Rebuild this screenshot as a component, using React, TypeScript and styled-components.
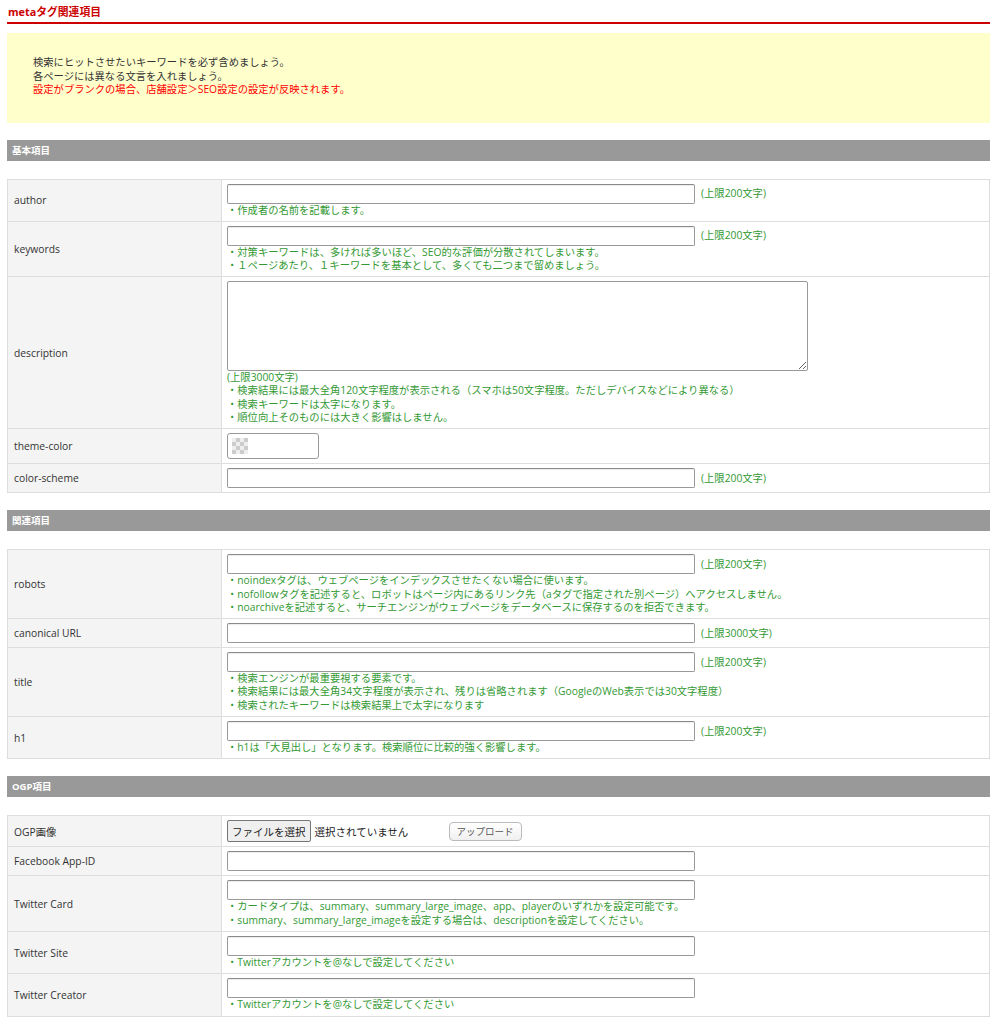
import React from 'react';
import styled, {createGlobalStyle} from 'styled-components';

const GlobalStyle = createGlobalStyle`
  html, body {
    margin: 0;
    padding: 0;
    background: #fff;
  }
  body {
    font-family: "Open Sans", "Noto Sans CJK JP", sans-serif;
    font-size: 10.3px;
    color: #333;
  }
`;

const Page = styled.div`
  width: 983px;
  padding: 5px 0 0 7px;
`;

const Title = styled.h2`
  margin: 0;
  padding: 0 0 4px 1px;
  font-size: 10.8px;
  line-height: 13px;
  font-weight: bold;
  color: #c00;
  border-bottom: 2px solid #c00;
`;

const Notice = styled.div`
  margin-top: 9px;
  background: #ffc;
  padding: 23px 26px 26px;
  line-height: 13.5px;
  color: #333;
`;

const Warn = styled.div`
  color: #f00;
`;

const SectionBar = styled.div`
  margin-top: 17px;
  height: 21px;
  line-height: 21px;
  background: #999;
  color: #fff;
  font-weight: bold;
  font-size: 9.5px;
  padding-left: 5px;
`;

const Table = styled.table`
  width: 100%;
  margin-top: 18px;
  border-collapse: collapse;
  table-layout: fixed;
  border: 1px solid #ddd;
`;

const Label = styled.th`
  box-sizing: border-box;
  width: 214px;
  padding: 4px 6px;
  background: #f3f4f3;
  border: 1px solid #ddd;
  text-align: left;
  font-weight: normal;
  vertical-align: middle;
  color: #333;
`;

const Cell = styled.td`
  padding: 4px 5px;
  border: 1px solid #ddd;
  vertical-align: top;
`;

const Line = styled.div`
  display: flex;
  align-items: center;
  gap: 6px;
`;

const TextInput = styled.input`
  box-sizing: border-box;
  width: 468px;
  height: 20px;
  margin: 0;
  border: 1px solid #999;
  border-top-color: #8a8a8a;
  border-radius: 2px;
  background: #fff;
  box-shadow: inset 0 1px 1px rgba(0, 0, 0, 0.08);
`;

const TextArea = styled.textarea`
  box-sizing: border-box;
  display: block;
  width: 581px;
  height: 90px;
  margin: 0;
  border: 1px solid #999;
  border-radius: 2px;
  background: #fff;
`;

const Limit = styled.span<{$block?: boolean}>`
  display: ${p => (p.$block ? 'block' : 'inline')};
  color: #393;
  line-height: 13px;
`;

const Notes = styled.div`
  color: #393;
  line-height: 13.3px;
`;

const ColorBox = styled.div`
  box-sizing: border-box;
  width: 92px;
  height: 26px;
  border: 1px solid #999;
  border-radius: 3px;
  background: #fff;
  padding: 4px;
`;

const Checker = styled.div`
  width: 16px;
  height: 16px;
  background-color: #eee;
  background-image:
    linear-gradient(45deg, #ccc 25%, transparent 25%, transparent 75%, #ccc 75%),
    linear-gradient(45deg, #ccc 25%, transparent 25%, transparent 75%, #ccc 75%);
  background-size: 8px 8px;
  background-position: 0 0, 4px 4px;
`;

const FileRow = styled.div`
  display: flex;
  align-items: center;
  height: 22px;
`;

const FileButton = styled.button`
  height: 22px;
  padding: 0 4px;
  margin: 0 4px 0 0;
  border: 1px solid #767676;
  border-radius: 2px;
  background: #efefef;
  font: inherit;
  font-size: 10.5px;
  color: #222;
`;

const FileName = styled.span`
  width: 134px;
  font-size: 10.5px;
  color: #222;
`;

const UploadButton = styled.button`
  height: 19px;
  padding: 0 7px;
  border: 1px solid #bbb;
  border-radius: 4px;
  background: linear-gradient(#fff, #f0f0f0);
  font: inherit;
  font-size: 9.5px;
  color: #555;
`;

type Row = {
  label: string;
  kind?: 'text' | 'area' | 'color' | 'file';
  limit?: string;
  notes?: string[];
};

const basic: Row[] = [
  {label: 'author', limit: '(上限200文字)', notes: ['・作成者の名前を記載します。']},
  {
    label: 'keywords',
    limit: '(上限200文字)',
    notes: [
      '・対策キーワードは、多ければ多いほど、SEO的な評価が分散されてしまいます。',
      '・１ページあたり、１キーワードを基本として、多くても二つまで留めましょう。',
    ],
  },
  {
    label: 'description',
    kind: 'area',
    limit: '(上限3000文字)',
    notes: [
      '・検索結果には最大全角120文字程度が表示される（スマホは50文字程度。ただしデバイスなどにより異なる）',
      '・検索キーワードは太字になります。',
      '・順位向上そのものには大きく影響はしません。',
    ],
  },
  {label: 'theme-color', kind: 'color'},
  {label: 'color-scheme', limit: '(上限200文字)'},
];

const related: Row[] = [
  {
    label: 'robots',
    limit: '(上限200文字)',
    notes: [
      '・noindexタグは、ウェブページをインデックスさせたくない場合に使います。',
      '・nofollowタグを記述すると、ロボットはページ内にあるリンク先（aタグで指定された別ページ）へアクセスしません。',
      '・noarchiveを記述すると、サーチエンジンがウェブページをデータベースに保存するのを拒否できます。',
    ],
  },
  {label: 'canonical URL', limit: '(上限3000文字)'},
  {
    label: 'title',
    limit: '(上限200文字)',
    notes: [
      '・検索エンジンが最重要視する要素です。',
      '・検索結果には最大全角34文字程度が表示され、残りは省略されます（GoogleのWeb表示では30文字程度）',
      '・検索されたキーワードは検索結果上で太字になります',
    ],
  },
  {label: 'h1', limit: '(上限200文字)', notes: ['・h1は「大見出し」となります。検索順位に比較的強く影響します。']},
];

const ogp: Row[] = [
  {label: 'OGP画像', kind: 'file'},
  {label: 'Facebook App-ID'},
  {
    label: 'Twitter Card',
    notes: [
      '・カードタイプは、summary、summary_large_image、app、playerのいずれかを設定可能です。',
      '・summary、summary_large_imageを設定する場合は、descriptionを設定してください。',
    ],
  },
  {label: 'Twitter Site', notes: ['・Twitterアカウントを@なしで設定してください']},
  {label: 'Twitter Creator', notes: ['・Twitterアカウントを@なしで設定してください']},
];

const Field = ({row}: {row: Row}) => {
  if (row.kind === 'color') {
    return <ColorBox><Checker/></ColorBox>;
  }
  if (row.kind === 'file') {
    return (
      <FileRow>
        <FileButton>ファイルを選択</FileButton>
        <FileName>選択されていません</FileName>
        <UploadButton>アップロード</UploadButton>
      </FileRow>
    );
  }
  if (row.kind === 'area') {
    return (
      <>
        <TextArea/>
        <Limit $block>{row.limit}</Limit>
      </>
    );
  }
  return (
    <Line>
      <TextInput type="text"/>
      {row.limit && <Limit>{row.limit}</Limit>}
    </Line>
  );
};

const Section = ({title, rows}: {title: string; rows: Row[]}) => (
  <>
    <SectionBar>{title}</SectionBar>
    <Table>
      <tbody>
        {rows.map(row => (
          <tr key={row.label}>
            <Label>{row.label}</Label>
            <Cell>
              <Field row={row}/>
              {row.notes && (
                <Notes>
                  {row.notes.map(n => <div key={n}>{n}</div>)}
                </Notes>
              )}
            </Cell>
          </tr>
        ))}
      </tbody>
    </Table>
  </>
);

const App = () => (
  <>
    <GlobalStyle/>
    <Page>
      <Title>metaタグ関連項目</Title>
      <Notice>
        <div>検索にヒットさせたいキーワードを必ず含めましょう。</div>
        <div>各ページには異なる文言を入れましょう。</div>
        <Warn>設定がブランクの場合、店舗設定＞SEO設定の設定が反映されます。</Warn>
      </Notice>
      <Section title="基本項目" rows={basic}/>
      <Section title="関連項目" rows={related}/>
      <Section title="OGP項目" rows={ogp}/>
    </Page>
  </>
);

export default App;
